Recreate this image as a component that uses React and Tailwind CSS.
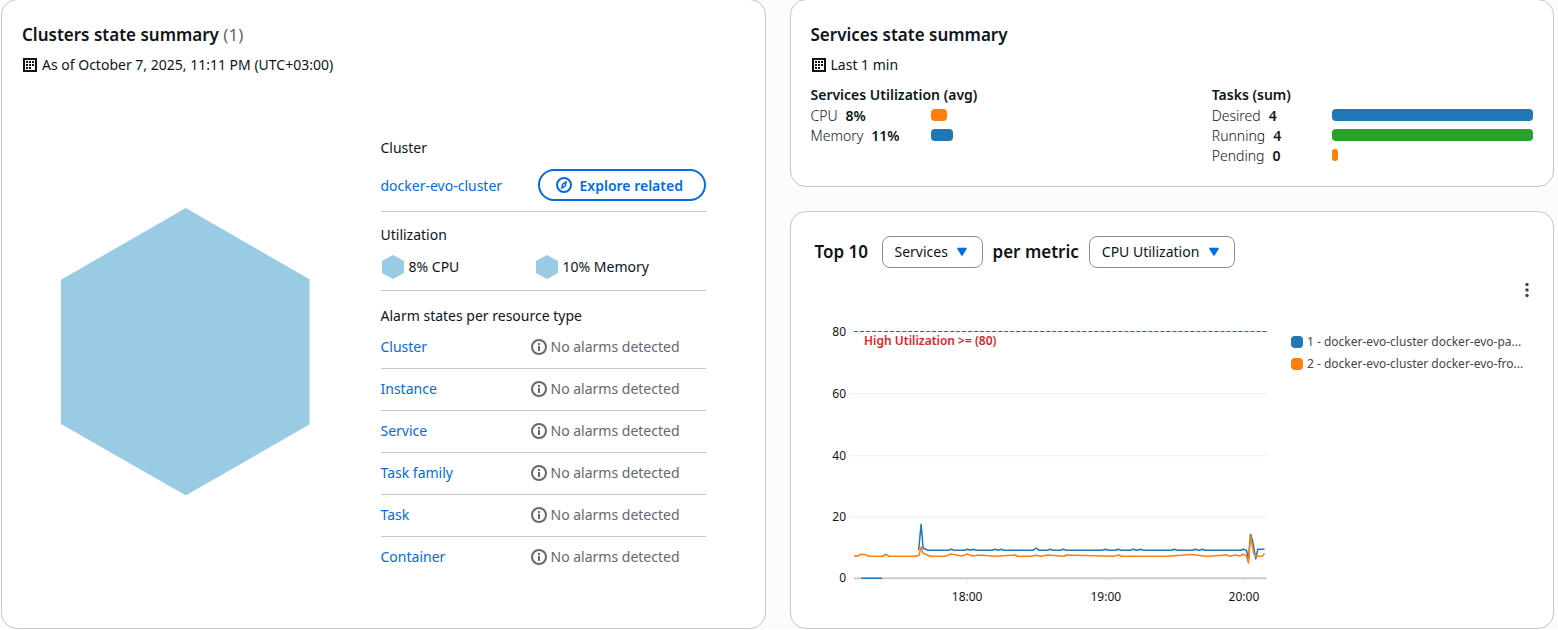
const PAGE_FONT = "font-['Noto_Sans','Open_Sans',sans-serif]";

const alarmResources = ["Cluster", "Instance", "Service", "Task family", "Task", "Container"];

const gridLines = [
  { value: 80, y: 11.5 },
  { value: 60, y: 73.5 },
  { value: 40, y: 135.5 },
  { value: 20, y: 196.5 },
];

const timeTicks = [
  { label: "18:00", x: 152 },
  { label: "19:00", x: 290.5 },
  { label: "20:00", x: 428.5 },
];

const bumps = [
  [136, 229], [152, 229], [158, 229], [180, 229], [186, 229], [221, 228], [235, 229], [248, 229],
  [290, 229], [303, 229], [318, 229], [325, 229], [359, 229], [380, 229], [387, 229], [428, 229],
];

const bluePoints = [
  "103.5,230 106,204 108,228 113,230",
  ...bumps.map(([x, y]) => `${x - 3},230 ${x},${y} ${x + 3},230`),
  "433,239 435,214 437,220 440.3,238.7 442.3,229 449,229",
].join(" ");

const orangePoints =
  "39,235.3 41.7,236 46.7,234 50,234.3 54,236 67.7,236 71,234 74,236 101,236 104,235 106,226.7 107.7,232.7 115,236 130,236 136,233.7 146.7,235.7 152,233.7 157.3,235.7 163.3,234.7 180,236 200,234.7 202.3,236 216.7,236 220,235 226,236 232.3,234.7 249,236 251,234.7 297.7,236 303.7,234.7 306,236 351.7,236 375,234.3 391.7,236 411.7,234.7 414.3,236 420,234.7 424.3,235.7 427.7,234 431,235.7 433,242.7 435,216 438.3,233.3 440.3,236 446.7,236 449,233.3";

function CalendarIcon() {
  return (
    <svg width="14" height="14" viewBox="0 0 14 14" className="shrink-0" fill="#0f141a" aria-hidden="true">
      <path fillRule="evenodd" d="M0 0h14v14H0zM2 2v10h10V2z" />
      <path d="M3 3h2v2H3zM6 3h2v2H6zM9 3h2v2H9zM3 6h2v2H3zM6 6h2v2H6zM9 6h2v2H9zM3 9h2v2H3zM6 9h2v2H6z" />
    </svg>
  );
}

function CompassIcon() {
  return (
    <svg width="16" height="16" viewBox="0 0 16 16" fill="none" stroke="currentColor" aria-hidden="true">
      <circle cx="8" cy="8" r="7" strokeWidth="2" />
      <path d="M10.200 4.800 9.300 8.800 5.800 11.200 6.700 7.200z" strokeWidth="1.500" strokeLinejoin="round" />
    </svg>
  );
}

function InfoIcon() {
  return (
    <svg width="16" height="16" viewBox="0 0 16 16" fill="none" stroke="currentColor" strokeWidth="2" aria-hidden="true">
      <circle cx="8" cy="8" r="7" />
      <path d="M8 7v5M8 4v2" />
    </svg>
  );
}

function Hexagon({ className }) {
  return (
    <svg viewBox="0 0 249 288" preserveAspectRatio="none" className={className} aria-hidden="true">
      <path d="M125 0 249 71.500V217L125 288 0 216.500V72z" fill="#9acbe4" />
    </svg>
  );
}

function Card({ className = "", children }) {
  return (
    <section className={`rounded-2xl border border-[#c6c6cd] bg-white ${className}`}>{children}</section>
  );
}

function TimeLine({ children }) {
  return (
    <p className="mt-2 flex items-center gap-[5px] pl-px leading-5">
      <CalendarIcon />
      {children}
    </p>
  );
}

function ClusterSummary() {
  return (
    <Card className="flex flex-col px-5 pt-[23px]">
      <h2 className="text-[17px] leading-6 font-semibold">
        Clusters state summary <span className="font-normal text-[#656871]">(1)</span>
      </h2>
      <TimeLine>As of October 7, 2025, 11:11 PM (UTC+03:00)</TimeLine>
      <div className="flex flex-1 items-center gap-[71px] px-[39px]">
        <div className="flex-1">
          <Hexagon className="aspect-[249/288] w-full" />
        </div>
        <div className="w-[325px] shrink-0 pt-0.5">
          <h3 className="leading-5">Cluster</h3>
          <div className="mt-[11px] flex items-center justify-between border-b border-[#c6c6cd] pb-[10px]">
            <a href="#cluster" className="text-[#006ce0]">docker-evo-cluster</a>
            <button
              type="button"
              className="flex h-8 w-[168px] items-center gap-2 rounded-full border-2 border-[#006ce0] pl-4 font-semibold whitespace-nowrap text-[#006ce0]"
            >
              <CompassIcon />
              Explore related
            </button>
          </div>
          <h3 className="mt-[13px] leading-5">Utilization</h3>
          <div className="mt-[10px] grid grid-cols-[154px_1fr] border-b border-[#c6c6cd] pb-[11px]">
            <span className="flex items-center gap-[5px] pl-px leading-6">
              <Hexagon className="h-6 w-[22px]" />
              8% CPU
            </span>
            <span className="flex items-center gap-[5px] pl-px leading-6">
              <Hexagon className="h-6 w-[22px]" />
              10% Memory
            </span>
          </div>
          <table className="w-full table-fixed border-collapse text-left">
            <caption className="pt-[15px] pb-px text-left leading-5">Alarm states per resource type</caption>
            <tbody>
              {alarmResources.map((name) => (
                <tr key={name} className="group">
                  <th
                    scope="row"
                    className="w-[150px] border-b border-[#c6c6cd] pt-[10px] pb-[11px] leading-5 font-normal group-last:border-0 group-last:pb-0"
                  >
                    <a href="#alarms" className="block text-[#006ce0]">{name}</a>
                  </th>
                  <td className="border-b border-[#c6c6cd] pt-[10px] pb-[11px] leading-5 text-[#656871] group-last:border-0 group-last:pb-0">
                    <span className="flex items-center gap-1">
                      <InfoIcon />
                      No alarms detected
                    </span>
                  </td>
                </tr>
              ))}
            </tbody>
          </table>
        </div>
      </div>
    </Card>
  );
}

function Stat({ label, value, children }) {
  return (
    <div className="flex h-5 items-center">
      <dt className="font-light">{label}</dt>
      <dd className="flex flex-1 items-center justify-between pl-2 font-semibold">
        {value}
        <span className="w-[201px]">{children}</span>
      </dd>
    </div>
  );
}

function Bar({ color, percent }) {
  return (
    <span className={`block h-3 min-w-[6px] rounded-[4px] ${color}`} style={{ width: `${percent}%` }} />
  );
}

function ServicesSummary() {
  return (
    <Card className="px-5 pt-[23px] pb-[21px]">
      <h2 className="text-[17px] leading-6 font-semibold">Services state summary</h2>
      <TimeLine>Last 1 min</TimeLine>
      <div className="mt-[10px] grid grid-cols-2 gap-20">
        <div>
          <h3 className="leading-5 font-semibold">Services Utilization (avg)</h3>
          <dl>
            <Stat label="CPU" value="8%"><Bar color="bg-[#ff7f0e]" percent={8} /></Stat>
            <Stat label="Memory" value="11%"><Bar color="bg-[#1f77b4]" percent={11} /></Stat>
          </dl>
        </div>
        <div>
          <h3 className="leading-5 font-semibold">Tasks (sum)</h3>
          <dl>
            <Stat label="Desired" value="4"><Bar color="bg-[#1f77b4]" percent={100} /></Stat>
            <Stat label="Running" value="4"><Bar color="bg-[#2ca02c]" percent={100} /></Stat>
            <Stat label="Pending" value="0"><Bar color="bg-[#ff7f0e]" percent={0} /></Stat>
          </dl>
        </div>
      </div>
    </Card>
  );
}

function Picker({ label, options, className }) {
  return (
    <div className={`relative ${className}`}>
      <select
        aria-label={label}
        className="h-8 w-full appearance-none rounded-lg border border-[#8c8c94] bg-white pr-7 pl-3 text-[14px] leading-5"
      >
        {options.map((option) => (
          <option key={option}>{option}</option>
        ))}
      </select>
      <svg
        width="12"
        height="10"
        viewBox="0 0 12 10"
        className="pointer-events-none absolute top-[11px] right-[15px]"
        aria-hidden="true"
      >
        <path d="M2 1.500h8L6 8z" fill="#006ce0" stroke="#006ce0" strokeWidth="1.500" strokeLinejoin="round" />
      </svg>
    </div>
  );
}

function UtilizationChart() {
  return (
    <svg viewBox="0 0 456 290" className="min-w-0 flex-1 text-[12px]" fill="#0f141a" role="img" aria-label="CPU utilization">
      {gridLines.map(({ value, y }) => (
        <g key={value}>
          <line x1="35" x2="451" y1={y} y2={y} stroke="#eee" />
          <text x="31" y={y + 4} textAnchor="end">{value}</text>
        </g>
      ))}
      <text x="31" y="262" textAnchor="end">0</text>
      <line x1="35" x2="39" y1="257.500" y2="257.500" stroke="#eee" />
      <line x1="39" x2="451" y1="258" y2="258" stroke="#ccc" strokeWidth="2" />
      {timeTicks.map(({ label, x }) => (
        <g key={label}>
          <line x1={x} x2={x} y1="259" y2="264" stroke="#eee" />
          <text x={x} y="281" textAnchor="middle">{label}</text>
        </g>
      ))}
      <line x1="39" x2="451" y1="11.500" y2="11.500" stroke="#d62728" strokeDasharray="4 2" />
      <text x="49" y="25" fill="#d62728" className="font-semibold">High Utilization &gt;= (80)</text>
      <g fill="none" strokeWidth="1.500" strokeLinejoin="round">
        <path d="M46 258H67" stroke="#1f77b4" />
        <polyline points={bluePoints} stroke="#1f77b4" />
        <polyline points={orangePoints} stroke="#ff7f0e" />
      </g>
    </svg>
  );
}

function TopMetrics() {
  return (
    <Card className="flex-1 px-6 pt-6">
      <div className="flex items-center text-[17px] leading-6 font-semibold">
        <h2 className="min-w-[57px]">Top 10</h2>
        <Picker
          label="Resource"
          options={["Services", "Clusters", "Tasks"]}
          className="ml-[10px] w-[101px] font-normal"
        />
        <span className="mx-[10px]">per metric</span>
        <Picker
          label="Metric"
          options={["CPU Utilization", "Memory Utilization"]}
          className="w-[146px] font-normal"
        />
      </div>
      <div className="flex h-[52px] items-start justify-end pt-[14px]">
        <button type="button" aria-label="Chart options" className="-mr-1.5 flex w-4 justify-center">
          <svg width="4" height="16" viewBox="0 0 4 16" fill="#424650" aria-hidden="true">
            <circle cx="2" cy="2.500" r="1.700" />
            <circle cx="2" cy="8" r="1.700" />
            <circle cx="2" cy="13.500" r="1.700" />
          </svg>
        </button>
      </div>
      <div className="flex items-start gap-5">
        <UtilizationChart />
        <ul className="w-[238px] shrink-0 pt-[11px] text-[12px] text-[#424650]">
          <li className="flex h-[22px] items-center gap-1 whitespace-nowrap">
            <span className="size-3 rounded-[4px] bg-[#1f77b4]" />1 - docker-evo-cluster docker-evo-pa...
          </li>
          <li className="flex h-[22px] items-center gap-1 whitespace-nowrap">
            <span className="size-3 rounded-[4px] bg-[#ff7f0e]" />2 - docker-evo-cluster docker-evo-fro...
          </li>
        </ul>
      </div>
    </Card>
  );
}

export default function App() {
  return (
    <main className={`min-h-screen bg-[#fcfcfd] text-[14px] text-[#0f141a] ${PAGE_FONT}`}>
      <div className="-mt-px grid min-h-screen grid-cols-2 gap-6 pr-1 pl-px">
        <ClusterSummary />
        <div className="flex flex-col gap-6">
          <ServicesSummary />
          <TopMetrics />
        </div>
      </div>
    </main>
  );
}
